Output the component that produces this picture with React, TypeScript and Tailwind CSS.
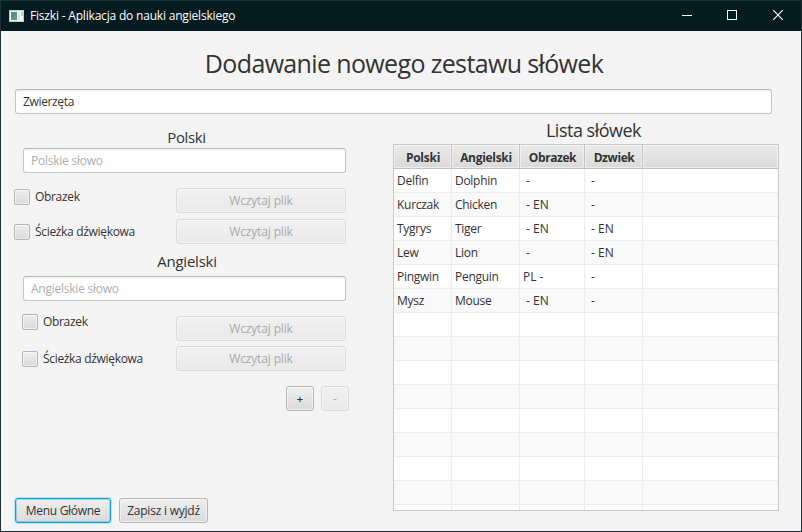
import type { ReactNode } from "react";

const raised =
  "border border-[#b5b5b5] bg-linear-to-b from-[#efefef] to-[#dadada] shadow-[inset_0_0_0_1px_rgba(255,255,255,0.55)]";

function Field({ value, placeholder, className }: { value?: string; placeholder?: string; className: string }) {
  return (
    <div
      className={`flex h-[25px] items-center rounded-[3px] border border-[#c5c5c5] border-t-[#b8b8b8] bg-linear-to-b from-[#f0f0f0] to-white to-[3px] pl-[7px] leading-[16px] ${className}`}
    >
      {value ? <span className="tracking-[-0.35px]">{value}</span> : <span className="text-[#adadad] tracking-[-0.24px]">{placeholder}</span>}
    </div>
  );
}

function Check({ label, className = "" }: { label: string; className?: string }) {
  return (
    <label className={`flex h-4 items-center gap-[5px] leading-[16px] tracking-[-0.32px] ${className}`}>
      <span className={`size-4 rounded-[2px] ${raised}`} />
      {label}
    </label>
  );
}

function Button({
  children,
  className,
  disabled,
  focused,
}: {
  children: ReactNode;
  className: string;
  disabled?: boolean;
  focused?: boolean;
}) {
  const look = focused
    ? "border border-[#0f9fd2] bg-linear-to-b from-[#efefef] to-[#dadada] shadow-[0_0_1px_1px_#b9e3f3,inset_0_0_0_1px_#35b0dc66]"
    : raised;
  return (
    <button
      disabled={disabled}
      className={`flex h-[25px] items-center justify-center rounded-[3px] leading-[16px] ${look} ${disabled ? "opacity-40" : ""} ${className}`}
    >
      {children}
    </button>
  );
}

function LoadButton({ className = "" }: { className?: string }) {
  return (
    <Button disabled className={`w-[170px] tracking-[-0.14px] ${className}`}>
      Wczytaj plik
    </Button>
  );
}

const headers = [
  { name: "Polski", spacing: "tracking-[-0.26px]" },
  { name: "Angielski", spacing: "tracking-[-0.3px]" },
  { name: "Obrazek", spacing: "tracking-[-0.42px]" },
  { name: "Dzwiek", spacing: "tracking-[-0.42px]" },
];

const words = [
  ["Delfin", "Dolphin", " -", " -"],
  ["Kurczak", "Chicken", " - EN", " -"],
  ["Tygrys", "Tiger", " - EN", " - EN"],
  ["Lew", "Lion", " -", " - EN"],
  ["Pingwin", "Penguin", "PL -", " -"],
  ["Mysz", "Mouse", " - EN", " -"],
  ...Array.from({ length: 9 }, () => ["", "", "", ""]),
];

const columns = "grid grid-cols-[58px_68px_65px_58px_1fr]";

function WordTable() {
  return (
    <div className="h-[367px] w-[386px] overflow-hidden border border-[#c8c8c8] bg-white">
      <div className={`${columns} h-6 border-b border-[#c0c0c0] bg-linear-to-b from-[#ececec] to-[#d9d9d9] font-bold`}>
        {headers.map((h) => (
          <div
            key={h.name}
            className={`flex items-center justify-center border-r border-[#c2c2c2] pt-[2px] pl-px leading-[16px] shadow-[inset_0_0_0_1px_rgba(255,255,255,0.5)] ${h.spacing}`}
          >
            {h.name}
          </div>
        ))}
        <div className="shadow-[inset_0_0_0_1px_rgba(255,255,255,0.5)]" />
      </div>
      {words.map((row, i) => (
        <div key={i} className={`${columns} h-6 border-b border-[#ececec] ${i % 2 ? "bg-[#f9f9f9]" : "bg-white"}`}>
          {row.map((cell, c) => (
            <div
              key={c}
              className={`border-r border-[#ececec] pl-[3px] leading-[24px] whitespace-pre ${c < 2 ? "tracking-[-0.28px]" : ""}`}
            >
              {cell}
            </div>
          ))}
          <div />
        </div>
      ))}
    </div>
  );
}

function TitleBar() {
  return (
    <header className="flex h-[30px] items-center bg-[#041b20] text-white">
      <svg className="ml-2 shrink-0" width="15" height="12" viewBox="0 0 15 12">
        <defs>
          <linearGradient id="pane" x1="0" y1="0" x2="1" y2="1">
            <stop offset="0" stopColor="#4a86a8" />
            <stop offset="1" stopColor="#55a878" />
          </linearGradient>
        </defs>
        <rect x="0.5" y="0.5" width="14" height="11" fill="#f4f4f4" stroke="#c6cacc" />
        <rect x="2" y="2" width="6" height="8" fill="url(#pane)" />
        <rect x="9" y="2" width="2" height="8" fill="#e2e4e6" />
        <rect x="12" y="2" width="2" height="4" fill="#b9d3c9" />
      </svg>
      <span className="ml-[6px] leading-[16px] tracking-[-0.19px]">Fiszki - Aplikacja do nauki angielskiego</span>
      <svg className="ml-auto" width="138" height="30" viewBox="0 0 138 30" fill="none" stroke="white">
        <path d="M19 14.5h10M64.5 9.5h9v9h-9z" shapeRendering="crispEdges" />
        <path d="M110.2 9.2l9.6 9.6M119.8 9.2l-9.6 9.6" strokeWidth="1.1" />
      </svg>
    </header>
  );
}

export default function App() {
  return (
    <div className="h-[532px] w-[802px] overflow-hidden border border-[#1f3138] bg-[#f4f4f4] font-['Open_Sans','Noto_Sans',sans-serif] text-[12px] text-[#333]">
      <TitleBar />
      <main className="flex h-[500px] flex-col">
        <h1 className="mt-[14px] ml-[6px] h-[36px] text-center text-[25px] leading-[36px] tracking-[-0.64px]">
          Dodawanie nowego zestawu słówek
        </h1>
        <Field value="Zwierzęta" className="mt-[8px] ml-[14px] w-[757px]" />
        <div className="flex h-[397px]">
          <section className="w-[392px]">
            <h2 className="mt-[13px] ml-[22px] w-[327px] text-center text-[15px] leading-[20px] tracking-[-0.38px]">Polski</h2>
            <Field placeholder="Polskie słowo" className="mt-px ml-[22px] w-[323px]" />
            <div className="mt-[15px] flex h-[25px] justify-between pr-[47px] pl-[13px]">
              <Check label="Obrazek" className="mt-px" />
              <LoadButton />
            </div>
            <div className="mt-[6px] flex h-[25px] justify-between pr-[47px] pl-[13px]">
              <Check label="Ścieżka dźwiękowa" className="mt-[5px]" />
              <LoadButton />
            </div>
            <h2 className="mt-[7px] ml-[22px] w-[328px] text-center text-[15px] leading-[20px] tracking-[-0.22px]">Angielski</h2>
            <Field placeholder="Angielskie słowo" className="mt-[5px] ml-[22px] w-[323px]" />
            <div className="mt-[15px] flex h-[25px] justify-between pr-[47px] pl-[21px]">
              <Check label="Obrazek" className="mt-[-2px]" />
              <LoadButton />
            </div>
            <div className="mt-[5px] flex h-[25px] justify-between pr-[47px] pl-[21px]">
              <Check label="Ścieżka dźwiękowa" className="mt-[5px]" />
              <LoadButton />
            </div>
            <div className="mt-[15px] ml-[285px] flex gap-[7px]">
              <Button className="w-7 text-[11px] font-semibold">+</Button>
              <Button disabled className="w-7">
                -
              </Button>
            </div>
          </section>
          <section className="w-[386px]">
            <h2 className="mt-[3px] h-[27px] pl-[15px] text-center text-[18px] leading-[26px] tracking-[-0.5px]">Lista słówek</h2>
            <WordTable />
          </section>
        </div>
        <footer className="-mt-[13px] ml-[14px] flex gap-2">
          <Button focused className="w-[96px] tracking-[-0.3px]">
            Menu Główne
          </Button>
          <Button className="w-[89px] tracking-[-0.22px]">Zapisz i wyjdź</Button>
        </footer>
      </main>
    </div>
  );
}
